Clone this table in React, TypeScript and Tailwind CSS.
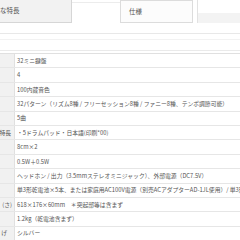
import React from "react";

const rows: { label: string; pr: string; value: string }[] = [
  { label: "", pr: "", value: "32ミニ鍵盤" },
  { label: "", pr: "", value: "4" },
  { label: "", pr: "", value: "100内蔵音色" },
  { label: "", pr: "", value: "32パターン（リズム8種 / フリーセッション8種 / ファニー8種、テンポ調節可能）" },
  { label: "", pr: "", value: "5曲" },
  { label: "特長", pr: "pr-[3px]", value: "・5ドラムパッド・日本語(印刷*00)" },
  { label: "", pr: "", value: "8cm×2" },
  { label: "", pr: "", value: "0.5W＋0.5W" },
  { label: "", pr: "", value: "ヘッドホン / 出力（3.5mmステレオミニジャック）、外部電源（DC7.5V）" },
  { label: "", pr: "", value: "単3形乾電池×5本、または家庭用AC100V電源（別売ACアダプターAD-1JL使用）/ 単3形" },
  { label: "(さ)", pr: "pr-[2px]", value: "618×176×60mm　＊突起部等は含まず" },
  { label: "", pr: "", value: "1.2kg（乾電池含まず）" },
  { label: "げ", pr: "pr-[7px]", value: "シルバー" },
];

export default function App() {
  return (
    <div
      className="w-[240px] h-[240px] overflow-hidden bg-white text-[#555]"
      style={{ fontFamily: '"Noto Sans CJK JP", "Noto Sans", sans-serif' }}
    >
      {/* tabs */}
      <div className="flex h-[23px]">
        <div className="w-[72px] shrink-0 bg-[#f2f2f2] border-r border-b border-[#d6d6d6] flex items-center text-[6.5px] whitespace-nowrap overflow-hidden">
          <span>な特長</span>
        </div>
        <div className="w-[48px] shrink-0 border-t border-[#ececec] mt-[2px]" />
        <div className="w-[73px] shrink-0 border border-[#dcdcdc] bg-[#fcfcfc] flex items-center pl-[8px] text-[6.5px]">
          仕様
        </div>
        <div className="w-[4px] shrink-0" />
        <div className="flex-1 border-l border-[#e2e2e2] flex flex-col">
          <div className="h-[13px]" />
          <div className="flex-1 bg-[#f3f3f3]" />
        </div>
      </div>
      {/* spacer section */}
      <div className="h-[10px]" />
      <div className="h-px bg-[#e8e8e8]" />
      <div className="h-[5px]" />
      <div className="h-px bg-[#f2f2f2]" />
      <div className="h-[10px]" />
      <div className="h-px bg-[#eaeaea]" />
      <div className="h-[2px]" />
      {/* table */}
      <div className="border-t border-[#e0e0e0]">
        {rows.map((r, i) => (
          <div key={i} className="flex h-[14.4px] border-b border-[#e6e6e6] text-[5.8px] leading-none">
            <div
              className={`w-[15px] shrink-0 bg-[#f1f1f1] border-r border-[#e0e0e0] flex items-center justify-end overflow-hidden whitespace-nowrap ${r.pr}`}
            >
              {r.label}
            </div>
            <div className="flex-1 flex items-center pl-[2px] whitespace-nowrap overflow-hidden">
              {r.value}
            </div>
          </div>
        ))}
      </div>
    </div>
  );
}
